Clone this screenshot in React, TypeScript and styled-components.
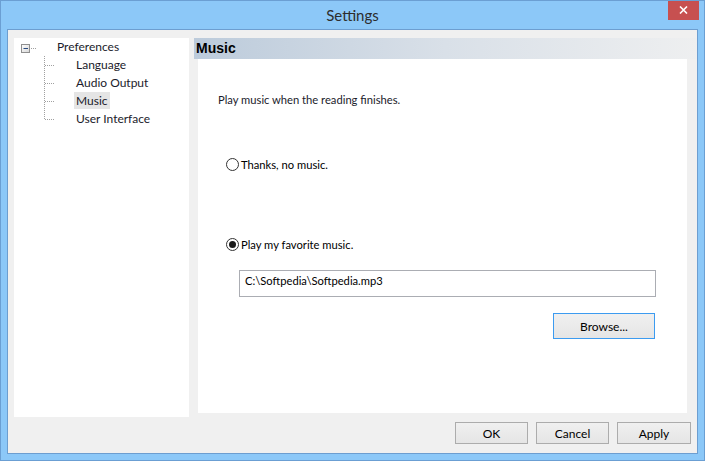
import styled, { createGlobalStyle } from 'styled-components'

const GlobalStyle = createGlobalStyle`
  html, body {
    margin: 0;
    padding: 0;
    background: #8cc8f8;
  }
  * {
    box-sizing: border-box;
  }
`

const uiFont = `Lato, "Noto Sans", sans-serif`

const Window = styled.div`
  width: 705px;
  height: 461px;
  display: flex;
  flex-direction: column;
  background: #8cc8f8;
  border: 1px solid #6b9fd3;
  font-family: ${uiFont};
  font-size: 12px;
  color: #1b1b2b;
  overflow: hidden;
`

const TitleBar = styled.div`
  height: 28px;
  display: grid;
  grid-template-columns: 1fr auto 1fr;
  align-items: start;
`

const Title = styled.div`
  grid-column: 2;
  padding-top: 5px;
  font-size: 15px;
  color: #2d2d2d;
  line-height: 18px;
`

const CloseButton = styled.div`
  grid-column: 3;
  justify-self: end;
  width: 31px;
  height: 20px;
  margin-right: 5px;
  margin-top: -1px;
  background: #c75050;
  display: flex;
  align-items: center;
  justify-content: center;
`

const Client = styled.div`
  flex: 1;
  margin: 0 6px 6px 6px;
  border: 1px solid #6d9ed0;
  background: #f0f0f0;
  display: flex;
  flex-direction: column;
`

const Body = styled.div`
  display: flex;
  gap: 5px;
  padding: 8px 0 0 6px;
  height: 387px;
`

const TreePanel = styled.div`
  width: 175px;
  height: 379px;
  background: #ffffff;
  display: flex;
  flex-direction: column;
`

const TreeRow = styled.div`
  height: 18px;
  display: flex;
  align-items: center;
`

const TreeLabel = styled.span<{ $selected?: boolean }>`
  line-height: 17px;
  padding: 0 2px;
  margin-left: -2px;
  margin-top: -1px;
  background: ${p => (p.$selected ? '#e5e5e5' : 'transparent')};
  white-space: nowrap;
`

const SettingsPanel = styled.div`
  flex: 1;
  display: flex;
  flex-direction: column;
`

const PanelHeader = styled.div`
  height: 21px;
  background: linear-gradient(to right, #bccbdb 0%, #d9e0e8 50%, #eeeff0 100%);
  font-family: "Liberation Sans", Arial, sans-serif;
  font-weight: bold;
  font-size: 14px;
  color: #000000;
  padding-left: 2px;
  line-height: 21px;
`

const PanelContent = styled.div`
  height: 354px;
  margin: 0 10px 0 4px;
  background: #ffffff;
  display: flex;
  flex-direction: column;
  align-items: flex-start;
  padding: 33px 0 0 20px;
  font-size: 11.2px;
`

const Intro = styled.div`
  line-height: 16px;
  white-space: nowrap;
`

const RadioRow = styled.label<{ $gap: number }>`
  display: flex;
  align-items: center;
  gap: 2px;
  height: 16px;
  margin: ${p => p.$gap}px 0 0 8px;
  white-space: nowrap;
  color: #000000;
`

const RadioCircle = styled.span<{ $checked?: boolean }>`
  width: 13px;
  height: 13px;
  border-radius: 50%;
  border: 1px solid #333333;
  background: #ffffff;
  display: flex;
  align-items: center;
  justify-content: center;

  &::after {
    content: '';
    width: 7px;
    height: 7px;
    border-radius: 50%;
    background: ${p => (p.$checked ? '#1a1a1a' : 'transparent')};
  }
`

const FileGroup = styled.div`
  width: 417px;
  margin: 18px 0 0 21px;
  display: flex;
  flex-direction: column;
  align-items: flex-end;
  gap: 16px;
`

const PathInput = styled.div`
  width: 100%;
  height: 27px;
  border: 1px solid #abadb3;
  padding: 0 5px;
  line-height: 20px;
  color: #000000;
`

const Button = styled.div<{ $focused?: boolean; $width: number; $height: number }>`
  width: ${p => p.$width}px;
  height: ${p => p.$height}px;
  border: 1px solid ${p => (p.$focused ? '#3c9bf0' : '#acacac')};
  background: linear-gradient(to bottom, #f0f0f0, #e5e5e5);
  color: #000000;
  font-size: 12px;
  display: flex;
  align-items: center;
  justify-content: center;
`

const BrowseButton = styled(Button)`
  margin-right: 1px;
`

const Footer = styled.div`
  flex: 1;
  display: flex;
  justify-content: flex-end;
  align-items: flex-start;
  gap: 8px;
  padding: 5px 6px 0 0;
`

const RootGuide = () => (
  <svg width="43" height="18" viewBox="0 0 43 18">
    <defs>
      <linearGradient id="exp" x1="0" y1="0" x2="1" y2="1">
        <stop offset="0" stopColor="#ffffff" />
        <stop offset="1" stopColor="#d6d6d6" />
      </linearGradient>
    </defs>
    <rect x="7.5" y="6.5" width="8" height="8" fill="url(#exp)" stroke="#8f8f8f" />
    <line x1="9.5" y1="10.5" x2="14" y2="10.5" stroke="#2a4a80" />
    <line x1="17" y1="10.5" x2="23" y2="10.5" stroke="#a0a0a0" strokeDasharray="1 1" />
  </svg>
)

const ChildGuide = ({ last }: { last?: boolean }) => (
  <svg width="62" height="18" viewBox="0 0 62 18">
    <line x1="30.5" y1="0" x2="30.5" y2={last ? 10 : 18} stroke="#a0a0a0" strokeDasharray="1 1" />
    <line x1="31" y1="9.5" x2="41" y2="9.5" stroke="#a0a0a0" strokeDasharray="1 1" />
  </svg>
)

const treeItems = ['Language', 'Audio Output', 'Music', 'User Interface']

export default function App() {
  return (
    <>
      <GlobalStyle />
      <Window>
        <TitleBar>
          <Title>Settings</Title>
          <CloseButton>
            <svg width="9" height="8" viewBox="0 0 9 8">
              <path d="M1 0.5 L8 7.5 M8 0.5 L1 7.5" stroke="#ffffff" strokeWidth="1.6" />
            </svg>
          </CloseButton>
        </TitleBar>
        <Client>
          <Body>
            <TreePanel>
              <TreeRow>
                <RootGuide />
                <TreeLabel>Preferences</TreeLabel>
              </TreeRow>
              {treeItems.map((item, i) => (
                <TreeRow key={item}>
                  <ChildGuide last={i === treeItems.length - 1} />
                  <TreeLabel $selected={item === 'Music'}>{item}</TreeLabel>
                </TreeRow>
              ))}
            </TreePanel>
            <SettingsPanel>
              <PanelHeader>Music</PanelHeader>
              <PanelContent>
                <Intro>Play music when the reading finishes.</Intro>
                <RadioRow $gap={48}>
                  <RadioCircle />
                  Thanks, no music.
                </RadioRow>
                <RadioRow $gap={64}>
                  <RadioCircle $checked />
                  Play my favorite music.
                </RadioRow>
                <FileGroup>
                  <PathInput>C:\Softpedia\Softpedia.mp3</PathInput>
                  <BrowseButton $focused $width={102} $height={26}>Browse...</BrowseButton>
                </FileGroup>
              </PanelContent>
            </SettingsPanel>
          </Body>
          <Footer>
            <Button $width={73} $height={22}>OK</Button>
            <Button $width={73} $height={22}>Cancel</Button>
            <Button $width={74} $height={22}>Apply</Button>
          </Footer>
        </Client>
      </Window>
    </>
  )
}
